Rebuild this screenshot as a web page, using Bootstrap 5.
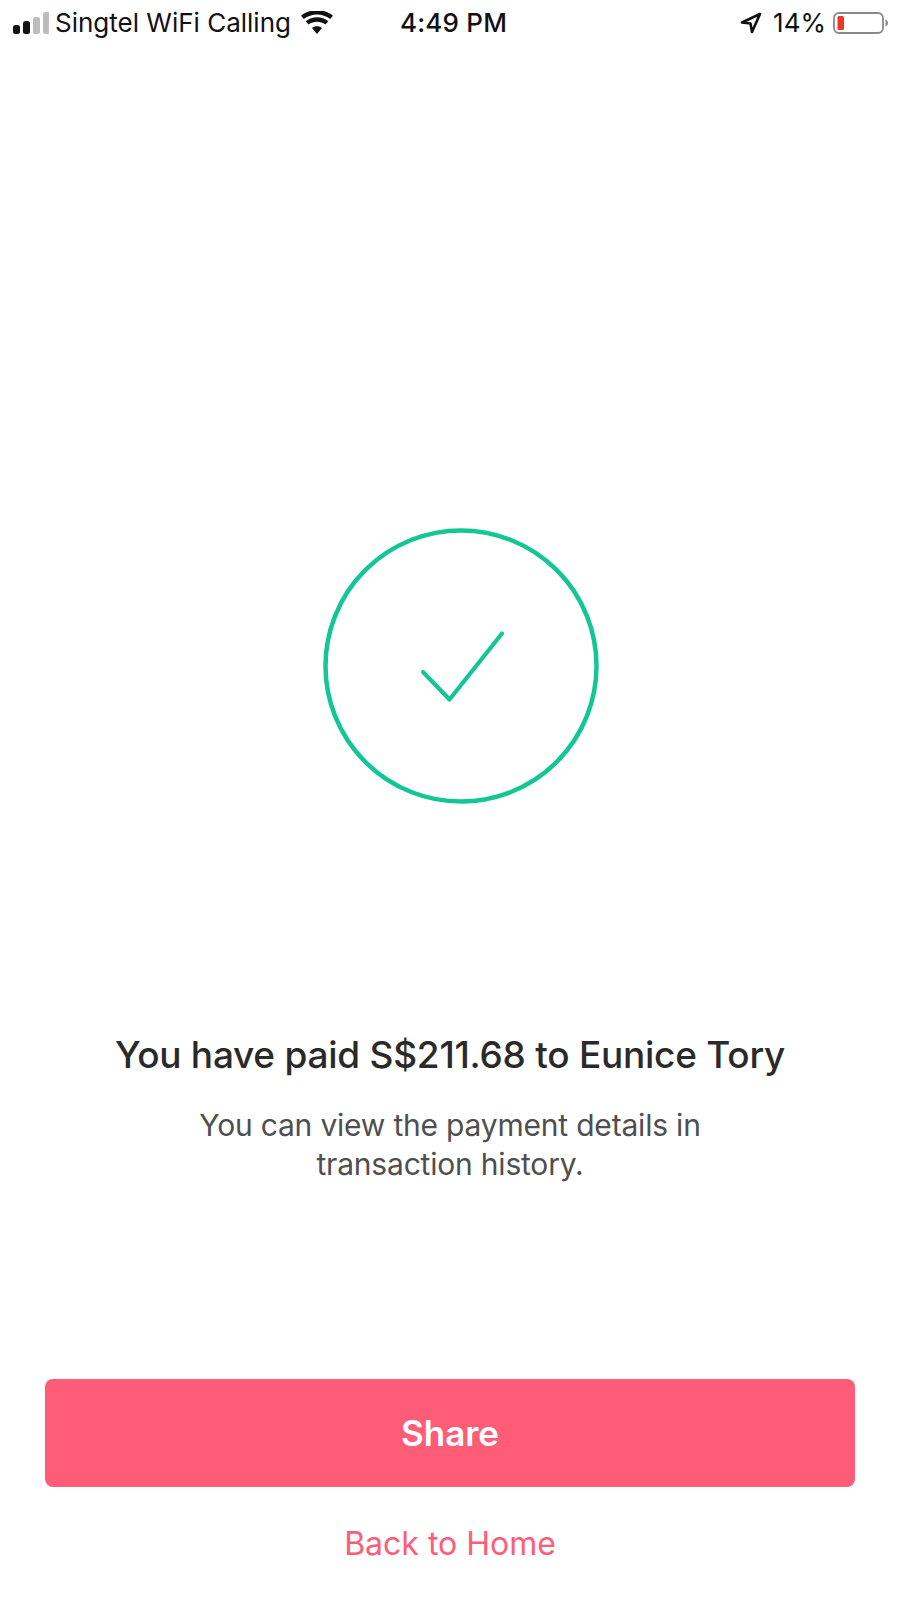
<!DOCTYPE html>
<html lang="en">
<head>
<meta charset="utf-8">
<title>Payment complete</title>
<link href="https://cdn.jsdelivr.net/npm/bootstrap@5.3.0/dist/css/bootstrap.min.css" rel="stylesheet">
<style>
html,body{margin:0;background:#fff;}
.screen{width:900px;height:1600px;font-family:Inter,"Liberation Sans",sans-serif;overflow:hidden;}
.statusline{height:46px;padding:0 12px 0 13px;font-size:26px;color:#111;line-height:1;}
.status-left{width:340px;}
.carrier{margin-left:6px;margin-right:10px;}
.clock{font-weight:500;font-size:26px;width:320px;padding-left:47px;letter-spacing:.2px;}
.status-right{margin-left:auto;}
.pct{margin:0 7px 0 11px;}
.tick-wrap{margin-top:482px;height:276px;padding-left:22px;}
.headline{font-size:37px;font-weight:500;color:#2a2a2a;line-height:44px;margin:229px 0 0;letter-spacing:-.25px;}
.subline{font-size:30px;color:#4f4f4f;line-height:39px;margin:29px 0 0;letter-spacing:-.2px;}
.share-btn{width:810px;height:108px;margin:195px 0 0 45px;background:#ff5c77;border:0;border-radius:8px;color:#fff;font-size:35px;font-weight:600;}
.share-btn:hover{background:#ff5c77;color:#fff;}
.home-link{color:#ff5c77;font-size:32px;line-height:40px;margin-top:37px;padding:0;border:0;}
.home-link:hover{color:#ff5c77;}
</style>
</head>
<body>
<div class="screen d-flex flex-column">
  <div class="statusline d-flex align-items-center">
    <div class="status-left d-flex align-items-center">
      <svg width="36" height="24" viewBox="0 0 36 24"><rect x="0" y="14" width="7" height="9" rx="2.5" fill="#111"/><rect x="10" y="10" width="7" height="13" rx="2.5" fill="#111"/><rect x="20" y="6" width="7" height="17" rx="2.5" fill="#bdbdbd"/><rect x="30" y="1" width="7" height="22" rx="2.5" fill="#bdbdbd"/></svg>
      <span class="carrier">Singtel WiFi Calling</span>
      <svg width="32" height="24" viewBox="0 0 32 24"><path d="M16 23l-5-6c3-2.400 7-2.400 10 0zM7.500 13.500l-2.800-3.300c6.500-5.200 16.100-5.200 22.600 0l-2.800 3.300c-5-3.800-12-3.800-17 0zM2.800 8L0 4.700c9-7.300 23-7.300 32 0L29.200 8C21.500 2 10.500 2 2.800 8z" fill="#111"/></svg>
    </div>
    <div class="clock">4:49 PM</div>
    <div class="status-right d-flex align-items-center">
      <svg width="22" height="22" viewBox="0 0 22 22"><path d="M20 2L2 10.500l8.500 1 1.500 8.500z" fill="none" stroke="#111" stroke-width="2.600" stroke-linejoin="round"/></svg>
      <span class="pct">14%</span>
      <svg width="55" height="24" viewBox="0 0 55 24"><rect x="1" y="2" width="49" height="20" rx="5" fill="none" stroke="#8a8a8a" stroke-width="1.800"/><rect x="4.500" y="5" width="6.500" height="14" rx="1.500" fill="#f0352b"/><path d="M52.500 8.500c1.500.5 2.500 2 2.500 3.500s-1 3-2.500 3.500z" fill="#8a8a8a"/></svg>
    </div>
  </div>
  <div class="tick-wrap d-flex justify-content-center">
    <svg width="276" height="276" viewBox="0 0 276 276"><circle cx="138" cy="138" r="135.500" fill="none" stroke="#13c795" stroke-width="4.500"/><path d="M100 144l26.500 27.500 52.500-66" fill="none" stroke="#13c795" stroke-width="4.200" stroke-linecap="round" stroke-linejoin="round"/></svg>
  </div>
  <h1 class="headline text-center">You have paid S$211.68 to Eunice Tory</h1>
  <p class="subline text-center">You can view the payment details in<br>transaction history.</p>
  <button type="button" class="btn share-btn">Share</button>
  <a href="#" class="btn home-link align-self-center">Back to Home</a>
</div>
<script src="https://cdn.jsdelivr.net/npm/bootstrap@5.3.0/dist/js/bootstrap.bundle.min.js"></script>
</body>
</html>
